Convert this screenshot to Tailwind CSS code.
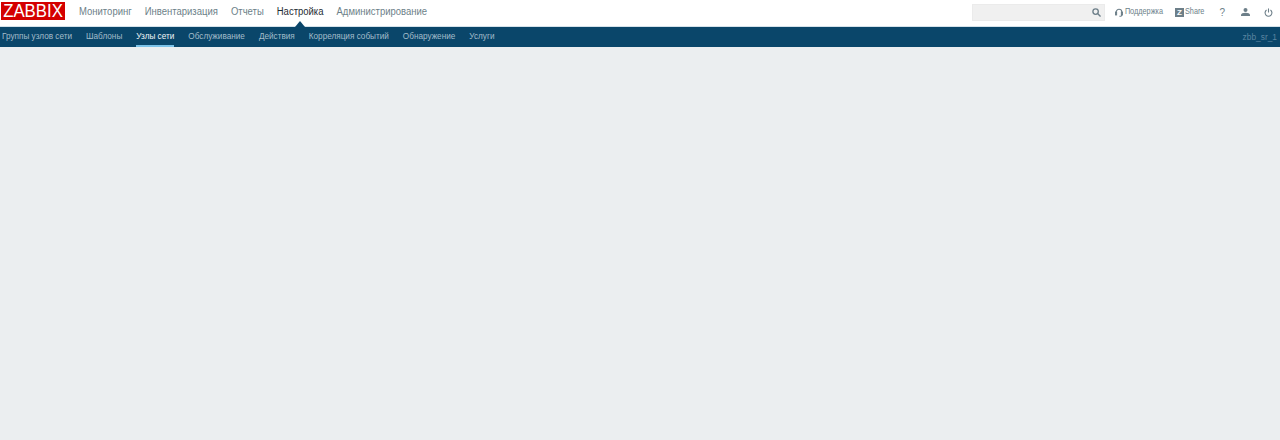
<!DOCTYPE html>
<html><head><meta charset="utf-8"><script src="https://cdn.jsdelivr.net/npm/@tailwindcss/browser@4"></script></head>
<body class="bg-[#ebeef0] h-[440px] overflow-hidden font-['Liberation_Sans',sans-serif]">
<header class="h-[27px] bg-white flex items-center justify-between border-b border-[#d5e2ea] relative">
  <div class="flex items-center">
    <div class="ml-[1px] mb-[4px] w-[64px] h-[18px] bg-[#d40000] text-white text-[16.8px] leading-[18px] text-center"><span class="inline-block scale-y-[1.12]">ZABBIX</span></div>
    <nav class="flex text-[9.5px] text-[#6d7f89] ml-[14px] gap-[13px] mb-[1px]">
      <span class="scale-y-[1.12]">Мониторинг</span><span class="scale-y-[1.12]">Инвентаризация</span><span class="scale-y-[1.12]">Отчеты</span>
      <span class="relative text-[#1f2c33]"><span class="inline-block scale-y-[1.12]">Настройка</span><span class="absolute left-[18px] top-[16px] w-0 h-0 border-x-[5px] border-x-transparent border-b-[6px] border-b-[#0a466a]"></span></span>
      <span class="scale-y-[1.12]">Администрирование</span>
    </nav>
  </div>
  <div class="flex items-center text-[#6d7f89] mb-[2px]">
    <div class="w-[133px] h-[17px] bg-[#f0f0f0] flex items-center justify-end pr-[3px] border border-[#ebebeb]">
      <svg class="w-[9px] h-[9px]" viewBox="0 0 10 10" fill="none" stroke="#6d7f89" stroke-width="1.5"><circle cx="4" cy="4" r="3"/><path d="M6.2 6.2L9.5 9.5"/></svg>
    </div>
    <svg class="ml-[10px] w-[8px] h-[9px]" viewBox="0 0 10 11" fill="none" stroke="#6d7f89" stroke-width="1.3"><path d="M1.500 6V5a3.500 3.500 0 0 1 7 0v1"/><rect x="0.500" y="5" width="1.500" height="3.500" fill="#6d7f89"/><rect x="8" y="5" width="1.500" height="3.500" fill="#6d7f89"/><path d="M8.500 8.500c0 1.200-1 1.800-3 1.800"/></svg>
    <span class="text-[7.3px] ml-[2px] mt-[1px] scale-y-[1.12]">Поддержка</span>
    <span class="ml-[12px] w-[9px] h-[9px] bg-[#6d7f89] text-white text-[8px] leading-[9px] text-center font-bold">Z</span>
    <span class="text-[7.3px] ml-[1px] mt-[1px] scale-y-[1.12]">Share</span>
    <span class="text-[10px] ml-[15px] scale-y-[1.12]">?</span>
    <svg class="ml-[16px] w-[9px] h-[8px]" viewBox="0 0 9 8" fill="#6d7f89"><circle cx="4.500" cy="2" r="2"/><path d="M0 8V7c0-1.500 2-2.300 4.500-2.300S9 5.500 9 7v1z"/></svg>
    <svg class="ml-[14px] mr-[7px] w-[9px] h-[9px]" viewBox="0 0 10 10" fill="none" stroke="#6d7f89" stroke-width="1.2"><path d="M5 0.500V5"/><path d="M2.800 2.200a3.800 3.800 0 1 0 4.400 0"/></svg>
  </div>
</header>
<div class="h-[20px] bg-[#0a466a] flex items-center justify-between">
  <nav class="flex h-full text-[8.2px] text-[#a3bdcb] pl-[2px] gap-[14px] leading-[20px]">
    <span class="scale-y-[1.12]">Группы узлов сети</span><span class="scale-y-[1.12]">Шаблоны</span>
    <span class="text-[#f2f6f8] border-b-[2px] border-[#7cc2e8] h-[20px]"><span class="inline-block scale-y-[1.12]">Узлы сети</span></span>
    <span class="scale-y-[1.12]">Обслуживание</span><span class="scale-y-[1.12]">Действия</span><span class="scale-y-[1.12]">Корреляция событий</span><span class="scale-y-[1.12]">Обнаружение</span><span class="scale-y-[1.12]">Услуги</span>
  </nav>
  <span class="text-[8.4px] text-[#5a84a0] pr-[3px] scale-y-[1.12]">zbb_sr_1</span>
</div>
</body></html>
